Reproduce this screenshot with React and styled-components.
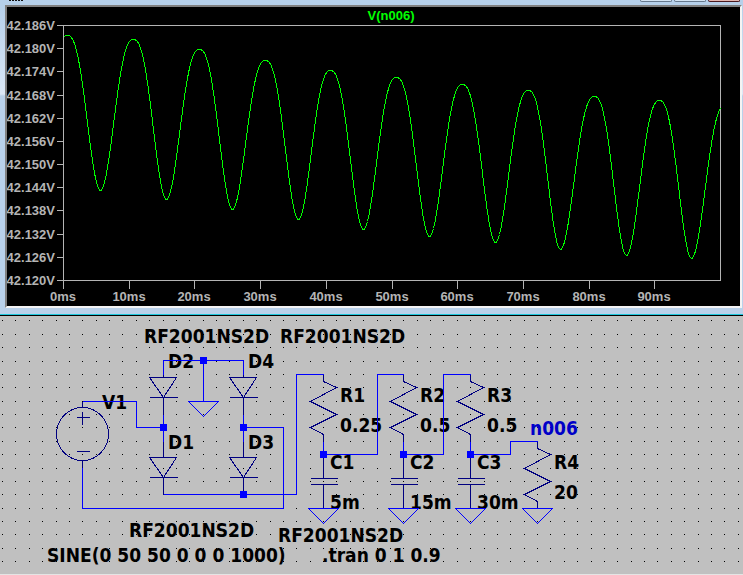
import React from 'react';
import styled, { createGlobalStyle } from 'styled-components';

const GlobalStyle = createGlobalStyle`
  body {
    margin: 0;
    background: #c0c0c0;
  }
`;

const Window = styled.main`
  display: flex;
  flex-direction: column;
`;

const PlotWindow = styled.section`
  display: flex;
  flex-direction: column;
  padding: 0 1px 6px 5px;
  background: linear-gradient(#b4cfe9 0, #dce8f6 94px, #b9d1ea 96px);
  border-bottom: 1px solid #1cc7dc;
`;

const TitleBar = styled.header`
  display: flex;
  justify-content: space-between;
  height: 5px;
  margin: 0 -1px 0 -5px;
  padding: 0 3px 0 9px;
  background: #b6d0ea;
`;

const TitleMark = styled.span`
  width: 14px;
  height: 1px;
  background: repeating-linear-gradient(90deg, #101010 0 2px, transparent 2px 3px);
`;

const WindowButtons = styled.div`
  display: flex;
  gap: 2px;
`;

const WindowButton = styled.button`
  box-sizing: border-box;
  width: 32px;
  height: 2px;
  padding: 0;
  border: 1px solid ${(props) => (props.$close ? '#4a1a20' : '#66788c')};
  border-top: 0;
  border-radius: 0 0 2px 2px;
  background: ${(props) => (props.$close ? '#e2b6b0' : '#d3e3f2')};
`;

const PlotPane = styled.div`
  border: 2px solid;
  border-color: #808080 #f4f4f4 #f4f4f4 #808080;
  background: #000;
`;

const Drawing = styled.svg`
  display: block;
  width: 100%;
  height: auto;
  shape-rendering: crispEdges;
`;

const AxisLine = styled.path`
  fill: none;
  stroke: #b4b4b4;
`;

const Trace = styled.polyline`
  fill: none;
  stroke: #00ff00;
`;

const PlotText = styled.text`
  font: bold 13px 'Liberation Sans', Arial, sans-serif;
  fill: ${(props) => (props.$trace ? '#00ff00' : '#b4b4b4')};
`;

const SchematicPane = styled.section`
  border-top: 1px solid #000;
  border-bottom: 1px solid #e4e4e4;
  background: #c0c0c0;
`;

const GridDots = styled.path`
  fill: #000;
`;

const Wire = styled.path`
  fill: none;
  stroke: #0000ff;
`;

const Part = styled.path`
  fill: none;
  stroke: #000080;
`;

const Junction = styled.rect`
  fill: #0000ff;
`;

const Label = styled.text`
  font: bold 19px 'DejaVu Sans Condensed', Tahoma, 'Noto Sans', sans-serif;
  fill: ${(props) => (props.$net ? '#0000c8' : '#000')};
`;

const volts = [
  '42.186V', '42.180V', '42.174V', '42.168V', '42.162V', '42.156V',
  '42.150V', '42.144V', '42.138V', '42.132V', '42.126V', '42.120V',
];
const times = ['0ms', '10ms', '20ms', '30ms', '40ms', '50ms', '60ms', '70ms', '80ms', '90ms'];

const tickY = (i) => Math.round(25 + (i * 255) / 11);
const tickX = (i) => Math.round(63 + i * 65.7);

// crests and valleys of the ripple, in turn
const turns = [
  [34, 180], [67, 35], [100, 190], [133, 39], [166, 199], [199, 49], [232, 209],
  [265, 60], [298, 219], [330, 70], [363, 229], [396, 77], [429, 236], [462, 84],
  [495, 242], [528, 90], [560, 249], [594, 96], [626, 255], [659, 100], [691, 258], [725, 104],
];

// rounded crests, sharper valleys
const rippleAt = (x) => {
  const i = turns.findIndex(([tx]) => tx > x);
  const [a, b] = [turns[i - 1], turns[i]];
  const [top, low] = a[1] < b[1] ? [a, b] : [b, a];
  const t = Math.abs(x - top[0]) / (b[0] - a[0]);
  return top[1] + (low[1] - top[1]) * Math.sin((Math.PI / 2) * Math.pow(t, 1.23)) ** 2;
};

const tracePoints = Array.from({ length: 658 }, (_, i) => 63 + i)
  .map((x) => `${x},${rippleAt(x).toFixed(1)}`)
  .join(' ');

const Plot = () => (
  <Drawing viewBox="7 7 733 299" role="img" aria-label="V(n006)">
    <g transform="translate(.5 .5)">
      <AxisLine d="M63 25H720V280H63Z" />
      {volts.map((v, i) => <AxisLine key={v} d={`M56 ${tickY(i)}h7`} />)}
      {times.map((t, i) => <AxisLine key={t} d={`M${tickX(i)} 280v8`} />)}
      <Trace points={tracePoints} />
    </g>
    <PlotText $trace x="391" y="20" textAnchor="middle">V(n006)</PlotText>
    {volts.map((v, i) => (
      <PlotText key={v} x="55" y={tickY(i) + 5} textAnchor="end">{v}</PlotText>
    ))}
    {times.map((t, i) => (
      <PlotText key={t} x={tickX(i)} y="301" textAnchor="middle">{t}</PlotText>
    ))}
  </Drawing>
);

const gridDots = () => {
  let d = '';
  for (let row = 0; row < 19; row++) {
    for (let col = 0; col < 56; col++) {
      d += `M${Math.round(2.1 + col * 13.375)} ${Math.round(320.4 + row * 13.38)}h1v1h-1z`;
    }
  }
  return d;
};

const Diode = ({ x, y }) => (
  <Part d={`M${x} ${y - 3}v3M${x - 14} ${y}h27L${x} ${y + 20}ZM${x - 14} ${y + 20}h28M${x} ${y + 20}v17`} />
);

const Resistor = ({ x, y }) => (
  <Part d={`M${x} ${y}v7l13 6l-26 14l26 13l-26 13l13 7v7`} />
);

const Capacitor = ({ x, y }) => (
  <Part d={`M${x} ${y}v24M${x - 13} ${y + 24}h27M${x - 13} ${y + 30}h27M${x} ${y + 30}v24`} />
);

const Ground = ({ x, y }) => <Wire d={`M${x - 15} ${y}h30l-15 15Z`} />;

const wires = [
  'M82 401H136V427H163',
  'M82 467V508H283V427H243',
  'M163 374V360H243V374M203 360V401',
  'M163 414V441M243 414V441',
  'M163 494H296V374H323',
  'M323 441V454H377V374H403',
  'M403 441V454H443V374H470',
  'M470 441V454H510V441H537',
];

const junctions = [[203, 360], [163, 427], [243, 427], [243, 494], [323, 454], [403, 454], [470, 454]];

const labels = [
  [144, 343, 'RF2001NS2D'],
  [280, 343, 'RF2001NS2D'],
  [168, 368, 'D2'],
  [248, 368, 'D4'],
  [102, 409, 'V1'],
  [168, 449, 'D1'],
  [248, 449, 'D3'],
  [340, 402, 'R1'],
  [340, 432, '0.25'],
  [420, 402, 'R2'],
  [420, 432, '0.5'],
  [487, 402, 'R3'],
  [487, 432, '0.5'],
  [330, 469, 'C1'],
  [330, 509, '5m'],
  [410, 469, 'C2'],
  [410, 509, '15m'],
  [477, 469, 'C3'],
  [477, 509, '30m'],
  [554, 469, 'R4'],
  [554, 499, '20'],
  [129, 537, 'RF2001NS2D'],
  [278, 542, 'RF2001NS2D'],
  [47, 562, 'SINE(0 50 50 0 0 0 1000)'],
  [322, 562, '.tran 0 1 0.9'],
];

const Schematic = () => (
  <Drawing viewBox="0 316 743 258" role="img" aria-label="Schematic">
    <GridDots d={gridDots()} />
    {labels.map(([x, y, text]) => <Label key={`${x}-${y}`} x={x} y={y}>{text}</Label>)}
    <Label $net x="530" y="435">n006</Label>
    <g transform="translate(.5 .5)">
      <Part d="M82 401V407M82 460V467M76 417h13M82 411v13M76 451h13" />
      <Part d="M82 407a26 26.5 0 0 1 0 53a26 26.5 0 0 1 0 -53" />
      {[163, 243].map((x) => (
        <React.Fragment key={x}>
          <Diode x={x} y={377} />
          <Diode x={x} y={457} />
        </React.Fragment>
      ))}
      <Part d="M163 441V457M243 441V457" />
      {[323, 403, 470].map((x) => (
        <React.Fragment key={x}>
          <Resistor x={x} y={374} />
          <Capacitor x={x} y={454} />
          <Ground x={x} y={508} />
        </React.Fragment>
      ))}
      <Resistor x={537} y={441} />
      <Ground x={537} y={508} />
      <Ground x={203} y={401} />
      {wires.map((d) => <Wire key={d} d={d} />)}
    </g>
    {junctions.map(([x, y]) => (
      <Junction key={`${x}-${y}`} x={x - 3} y={y - 3} width="7" height="7" />
    ))}
  </Drawing>
);

const App = () => {
  return (
    <Window>
      <GlobalStyle />
      <PlotWindow>
        <TitleBar>
          <TitleMark />
          <WindowButtons>
            <WindowButton aria-label="Minimize" />
            <WindowButton aria-label="Maximize" />
            <WindowButton $close aria-label="Close" />
          </WindowButtons>
        </TitleBar>
        <PlotPane>
          <Plot />
        </PlotPane>
      </PlotWindow>
      <SchematicPane>
        <Schematic />
      </SchematicPane>
    </Window>
  );
};

export default App;
